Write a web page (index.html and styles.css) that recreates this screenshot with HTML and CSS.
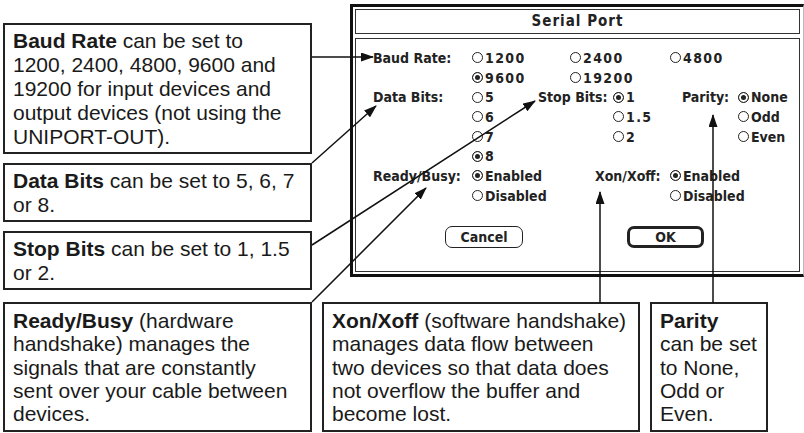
FILE: index.html
```html
<!DOCTYPE html>
<html lang="en">

<head>
  <meta charset="UTF-8" />
  <meta name="viewport" content="width=device-width, initial-scale=1.0" />
  <title>Serial Port settings</title>
  <link rel="stylesheet" href="styles.css">
</head>

<body>

  <div class="page">
    <div class="top">
      <div class="notes">
        <p class="note"><b>Baud Rate</b> can be set to<br>1200, 2400, 4800, 9600 and<br>19200 for input devices and<br>output devices (not using the<br>UNIPORT-OUT).</p>
        <p class="note"><b>Data Bits</b> can be set to 5, 6, 7<br>or 8.</p>
        <p class="note"><b>Stop Bits</b> can be set to 1, 1.5<br>or 2.</p>
      </div>

      <div class="dialog">
        <div class="dialog-title">Serial Port</div>
        <div class="dialog-body">
          <div class="settings">
            <span class="c1">Baud Rate:</span>
            <span class="radio num c2">1200</span>
            <span class="radio num c4">2400</span>
            <span class="radio num c7">4800</span>

            <span class="radio num on c2">9600</span>
            <span class="radio num c4">19200</span>

            <span class="c1">Data Bits:</span>
            <span class="radio num c2s">5</span>
            <span class="c3">Stop Bits:</span>
            <span class="radio num on c6">1</span>
            <span class="c8">Parity:</span>
            <span class="radio on c9">None</span>

            <span class="radio num c2">6</span>
            <span class="radio num c6">1.5</span>
            <span class="radio c9">Odd</span>

            <span class="radio num c2">7</span>
            <span class="radio num c6">2</span>
            <span class="radio c9">Even</span>

            <span class="radio num on c2">8</span>

            <span class="c1">Ready/Busy:</span>
            <span class="radio on c2">Enabled</span>
            <span class="c5">Xon/Xoff:</span>
            <span class="radio on c7">Enabled</span>

            <span class="radio c2">Disabled</span>
            <span class="radio c7">Disabled</span>
          </div>

          <div class="buttons">
            <button type="button" class="btn">Cancel</button>
            <button type="button" class="btn btn-default">OK</button>
          </div>
        </div>
      </div>
    </div>

    <div class="bottom">
      <p class="note note-ready"><b>Ready/Busy</b> (hardware<br>handshake) manages the<br>signals that are constantly<br>sent over your cable between<br>devices.</p>
      <p class="note note-xon"><b>Xon/Xoff</b> (software handshake)<br>manages data flow between<br>two devices so that data does<br>not overflow the buffer and<br>become lost.</p>
      <p class="note note-parity"><b>Parity</b><br>can be set<br>to None,<br>Odd or<br>Even.</p>
    </div>

    <!-- callout lines -->
    <svg class="callouts" width="804" height="433" viewBox="0 0 804 433">
      <defs>
        <marker id="head" markerWidth="13" markerHeight="9" refX="12" refY="4.5" orient="auto" markerUnits="userSpaceOnUse">
          <path d="M0,0 L13,4.5 L0,9 z" fill="#111" />
        </marker>
      </defs>
      <g stroke="#111" stroke-width="1.5" fill="none" marker-end="url(#head)">
        <line x1="312" y1="57" x2="373" y2="57" />
        <line x1="312" y1="163" x2="376" y2="106" />
        <line x1="312" y1="245" x2="535" y2="101" />
        <line x1="312" y1="302" x2="426" y2="188" />
        <line x1="600" y1="303" x2="600" y2="192" />
        <line x1="713" y1="303" x2="713" y2="115" />
      </g>
    </svg>
  </div>

</body>

</html>
```

FILE: styles.css
```css
body {
  margin: 0;
  font-family: "Liberation Sans", Arial, sans-serif;
  color: #1a1a1a;
  background: #fff;
}
.page {
  position: relative;
  width: 804px;
  height: 433px;
  overflow: hidden;
}
.top {
  display: flex;
  align-items: flex-start;
}
.notes {
  width: 309px;
  margin: 23px 0 0 3px;
  display: flex;
  flex-direction: column;
  gap: 9px;
}
.note {
  margin: 0;
  border: 2px solid #222;
  padding: 4px 8px 3px;
  font-size: 21px;
  line-height: 24px;
}

/* dialog */
.dialog {
  margin: 4px 0 0 38px;
  width: 454px;
  height: 273px;
  box-sizing: border-box;
  border: 3px solid #111;
  border-right: 1px solid #bbb;
  padding: 2px 3px 2px 2px;
  display: flex;
  flex-direction: column;
  gap: 4px;
  font-family: "DejaVu Sans Condensed", "DejaVu Sans", sans-serif;
  font-stretch: condensed;
  font-weight: bold;
  font-size: 14px;
  color: #222;
}
.dialog-title {
  height: 25px;
  box-sizing: border-box;
  border: 1px solid #333;
  text-align: center;
  line-height: 23px;
  font-size: 15px;
  letter-spacing: 1px;
}
.dialog-body {
  flex: 1;
  border: 1px solid #333;
  padding: 9px 0 0 17px;
}
.settings {
  display: grid;
  grid-template-columns: 99px 66px 32px 25px 18px 57px 12px 56px 1fr;
  grid-auto-rows: 19.7px;
  align-items: center;
}
.c1 { grid-column: 1 / 2; }
.c2 { grid-column: 2 / 4; }
.c2s { grid-column: 2 / 3; }
.c3 { grid-column: 3 / 6; }
.c4 { grid-column: 4 / 7; }
.c5 { grid-column: 5 / 7; }
.c6 { grid-column: 6 / 7; }
.c7 { grid-column: 7 / 10; }
.c8 { grid-column: 8 / 9; }
.c9 { grid-column: 9 / 10; }
.radio {
  display: flex;
  align-items: center;
  gap: 2px;
  white-space: nowrap;
}
.radio.num {
  letter-spacing: 1.4px;
}
.radio::before {
  content: "";
  flex: none;
  width: 11px;
  height: 11px;
  box-sizing: border-box;
  border: 1px solid #222;
  border-radius: 50%;
}
.radio.on::before {
  background: #222;
  box-shadow: inset 0 0 0 2px #fff;
}
.buttons {
  display: flex;
  gap: 104px;
  margin: 20px 0 0 72px;
}
.btn {
  width: 78px;
  height: 22px;
  box-sizing: border-box;
  border: 1px solid #222;
  border-radius: 7px;
  background: #fff;
  color: #222;
  font: inherit;
  padding: 0;
}
.btn-default {
  width: 77px;
  border-width: 3px;
}

/* bottom notes */
.bottom {
  display: flex;
  gap: 10px;
  margin: 12px 0 0 3px;
}
.bottom .note {
  height: 130px;
  box-sizing: border-box;
  padding: 5px 8px 0;
  line-height: 23.3px;
}
.note-ready { width: 309px; }
.note-xon { width: 318px; }
.note-parity { width: 118px; }

.callouts {
  position: absolute;
  left: 0;
  top: 0;
  pointer-events: none;
}
```
